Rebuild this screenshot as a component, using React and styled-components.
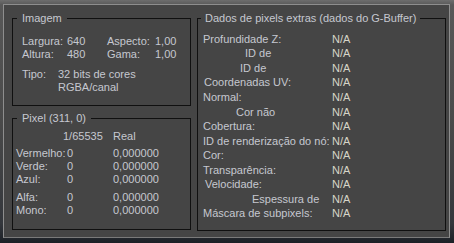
import React from "react";
import styled, { createGlobalStyle } from "styled-components";

const GlobalStyle = createGlobalStyle`
  html, body {
    margin: 0;
    padding: 0;
    background: #3a3a3a;
  }
  body {
    font-family: "Liberation Sans", Arial, sans-serif;
    font-size: 11px;
    color: #c6c8d0;
  }
`;

const extraRows = [
  { label: "Profundidade Z:", indent: 0 },
  { label: "ID de", indent: 42 },
  { label: "ID de", indent: 37 },
  { label: "Coordenadas UV:", indent: 1 },
  { label: "Normal:", indent: 0 },
  { label: "Cor não", indent: 33 },
  { label: "Cobertura:", indent: -1 },
  { label: "ID de renderização do nó:", indent: 0 },
  { label: "Cor:", indent: 0 },
  { label: "Transparência:", indent: 0 },
  { label: "Velocidade:", indent: 2 },
  { label: "Espessura de", indent: 49 },
  { label: "Máscara de subpixels:", indent: 0 },
];

const pixelRows = [
  { label: "Vermelho:", value: "0", real: "0,000000" },
  { label: "Verde:", value: "0", real: "0,000000" },
  { label: "Azul:", value: "0", real: "0,000000" },
  { label: "Alfa:", value: "0", real: "0,000000", gap: true },
  { label: "Mono:", value: "0", real: "0,000000" },
];

export default function App() {
  return (
    <>
      <GlobalStyle />
      <Frame>
        <Panel>
          <LeftColumn>
            <Group $height={94}>
              <Title $offset={4} $pad={5}>Imagem</Title>
              <ImageGrid>
                <span>Largura:</span>
                <span>640</span>
                <span>Aspecto:</span>
                <span>1,00</span>
                <span>Altura:</span>
                <span>480</span>
                <span>Gama:</span>
                <span>1,00</span>
              </ImageGrid>
              <TypeGrid>
                <span>Tipo:</span>
                <span>32 bits de cores</span>
                <span />
                <span>RGBA/canal</span>
              </TypeGrid>
            </Group>
            <Group $height={118}>
              <Title $offset={4} $pad={5}>Pixel (311, 0)</Title>
              <PixelHeader>
                <span />
                <span>1/65535</span>
                <span>Real</span>
              </PixelHeader>
              <PixelList>
                {pixelRows.map((r) => (
                  <PixelRow key={r.label} $gap={r.gap}>
                    <span>{r.label}</span>
                    <span>{r.value}</span>
                    <span>{r.real}</span>
                  </PixelRow>
                ))}
              </PixelList>
            </Group>
          </LeftColumn>
          <Group $height={219} $width={249}>
            <Title $offset={3} $pad={4}>Dados de pixels extras (dados do G-Buffer)</Title>
            <ExtraList>
              {extraRows.map((r, i) => (
                <React.Fragment key={i}>
                  <ExtraLabel $indent={r.indent}>{r.label}</ExtraLabel>
                  <Value>N/A</Value>
                </React.Fragment>
              ))}
            </ExtraList>
          </Group>
        </Panel>
      </Frame>
    </>
  );
}

const Frame = styled.div`
  width: 454px;
  height: 243px;
  box-sizing: border-box;
  padding: 4px 4px 5px 3px;
  background: linear-gradient(
    to bottom,
    #6e6e6e 0px,
    #585858 5px,
    #4a4a4a 50%,
    #34373c 92%,
    #1c2026 100%
  );
`;

const Panel = styled.div`
  height: 100%;
  box-sizing: border-box;
  border: 1px solid #8e8e8e;
  border-bottom-color: #7a7a7a;
  background: #454545;
  display: flex;
  align-items: flex-start;
  gap: 6px;
  padding: 7px 0 0 8px;
`;

const LeftColumn = styled.div`
  display: flex;
  flex-direction: column;
  gap: 6px;
  width: 179px;
`;

const Group = styled.fieldset`
  margin: 0;
  padding: 0;
  min-width: 0;
  box-sizing: border-box;
  width: ${(p) => (p.$width ? `${p.$width}px` : "100%")};
  height: ${(p) => p.$height}px;
  border: 1px solid #101010;
`;

const Title = styled.legend`
  margin-left: ${(p) => p.$offset}px;
  padding: 0 ${(p) => p.$pad}px;
  line-height: 13px;
  color: #c6c8d0;
`;

const ImageGrid = styled.div`
  display: grid;
  grid-template-columns: 45px 40px 48px auto;
  line-height: 13px;
  padding: 10px 0 0 9px;
`;

const TypeGrid = styled.div`
  display: grid;
  grid-template-columns: 36px auto;
  line-height: 13px;
  padding: 7px 0 0 9px;
`;

const PixelHeader = styled.div`
  display: grid;
  grid-template-columns: 47px 50px auto;
  line-height: 13px;
  padding: 5px 0 0 3px;
`;

const PixelList = styled.div`
  display: flex;
  flex-direction: column;
  padding: 4px 0 0 3px;
`;

const PixelRow = styled.div`
  display: grid;
  grid-template-columns: 51px 46px auto;
  line-height: 13px;
  margin-top: ${(p) => (p.$gap ? "5px" : "0")};
`;

const ExtraList = styled.div`
  display: grid;
  grid-template-columns: 129px auto;
  grid-auto-rows: 14.55px;
  align-items: center;
  line-height: 13px;
  padding: 7px 0 0 5px;
`;

const ExtraLabel = styled.span`
  padding-left: ${(p) => p.$indent}px;
  white-space: nowrap;
`;

const Value = styled.span`
  color: #d6d6c8;
`;
